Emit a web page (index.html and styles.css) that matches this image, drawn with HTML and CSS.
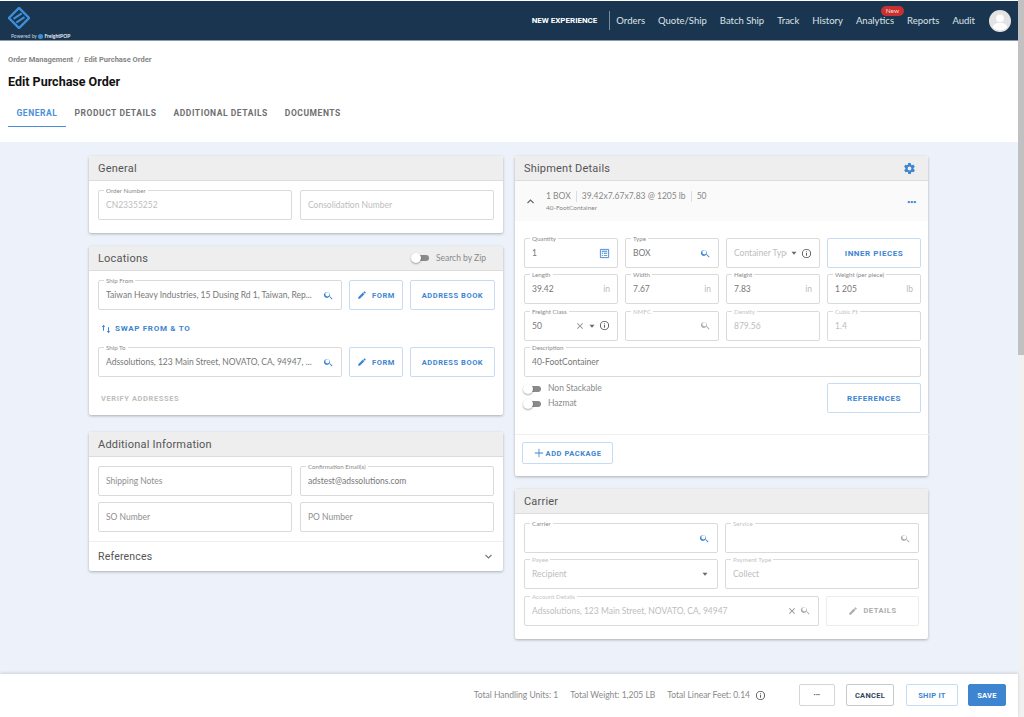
FILE: index.html
```html
<!DOCTYPE html>
<html lang="en">
<head>
    <meta charset="UTF-8">
    <title>Edit Purchase Order</title>
    <link rel="stylesheet" href="styles.css">
</head>
<body>
<svg class="defs" width="0" height="0">
    <symbol id="i-search" viewBox="0 0 24 24"><path d="M15.5 14h-.8l-.3-.3A6.5 6.5 0 1 0 14 14.4l.3.3v.8l5 5 1.5-1.5-5-5zm-6 0a4.5 4.5 0 1 1 0-9 4.5 4.5 0 0 1 0 9z"/></symbol>
    <symbol id="i-pencil" viewBox="0 0 24 24"><path d="M3 17.2V21h3.8L17.8 9.9l-3.7-3.7L3 17.2zM20.7 7a1 1 0 0 0 0-1.4l-2.3-2.3a1 1 0 0 0-1.4 0l-1.8 1.8 3.7 3.7L20.7 7z"/></symbol>
    <symbol id="i-info" viewBox="0 0 24 24"><path d="M11 7h2v2h-2zm0 4h2v6h-2zm1-9a10 10 0 1 0 0 20 10 10 0 0 0 0-20zm0 18a8 8 0 1 1 0-16 8 8 0 0 1 0 16z"/></symbol>
    <symbol id="i-close" viewBox="0 0 24 24"><path d="M19 6.4 17.6 5 12 10.6 6.4 5 5 6.4 10.6 12 5 17.6 6.4 19l5.6-5.6 5.6 5.6 1.4-1.4-5.6-5.6z"/></symbol>
    <symbol id="i-caret" viewBox="0 0 24 24"><path d="M6 9h12l-6 7z"/></symbol>
</svg>
<div class="app">
    <div class="page">
        <header class="topbar">
            <div class="brand">
                <svg class="brand-mark" viewBox="0 0 24 24" width="22" height="22"><path d="M12 1 23 12 12 23 1 12z" fill="none" stroke="#3f8fd8" stroke-width="2.6"/><path d="M6 13 15 7M9 17l9-6" stroke="#3f8fd8" stroke-width="2.4" fill="none"/></svg>
                <div class="brand-sub">Powered by <span class="brand-dot"></span> <b>FreightPOP</b></div>
            </div>
            <nav class="nav">
                <a class="nav-new">NEW EXPERIENCE</a>
                <span class="nav-sep"></span>
                <a>Orders</a>
                <a>Quote/Ship</a>
                <a>Batch Ship</a>
                <a>Track</a>
                <a>History</a>
                <a class="nav-badged">Analytics<span class="badge">New</span></a>
                <a>Reports</a>
                <a>Audit</a>
                <svg class="avatar" viewBox="0 0 24 24" width="22" height="22"><circle cx="12" cy="12" r="12" fill="#e3e3e3"/><circle cx="12" cy="9" r="4.2" fill="#fff"/><path d="M4 19c1-4 5-5 8-5s7 1 8 5a12 12 0 0 1-16 0z" fill="#fff"/></svg>
            </nav>
        </header>

        <section class="page-head">
            <div class="crumbs"><span>Order Management</span><i>/</i><span>Edit Purchase Order</span></div>
            <h1>Edit Purchase Order</h1>
            <div class="tabs">
                <a class="tab active">GENERAL</a>
                <a class="tab">PRODUCT DETAILS</a>
                <a class="tab">ADDITIONAL DETAILS</a>
                <a class="tab">DOCUMENTS</a>
            </div>
        </section>

        <main class="content">
            <div class="column">
                <section class="card card-general">
                    <div class="card-head"><h2>General</h2></div>
                    <div class="card-body two-col">
                        <div class="field"><label>Order Number</label><span class="val off">CN23355252</span></div>
                        <div class="field"><span class="val hint off">Consolidation Number</span></div>
                    </div>
                </section>

                <section class="card card-locations">
                    <div class="card-head">
                        <h2>Locations</h2>
                        <div class="zip"><span class="toggle"></span><span>Search by Zip</span></div>
                    </div>
                    <div class="card-body loc-body">
                        <div class="loc-row">
                            <div class="field"><label>Ship From</label><span class="val">Taiwan Heavy Industries, 15 Dusing Rd 1, Taiwan, Rep...</span><svg class="ico blue"><use href="#i-search"/></svg></div>
                            <button class="btn btn-form"><svg class="ico-sm"><use href="#i-pencil"/></svg>FORM</button>
                            <button class="btn btn-book">ADDRESS BOOK</button>
                        </div>
                        <a class="swap">
                            <svg viewBox="0 0 12 12" width="10" height="10"><path d="M3 1 1 3.5h1.4V8h1.2V3.5H5zM8.4 4v4.500H7L9 11l2-2.500H9.600V4z" fill="#3d85d1"/></svg>
                            SWAP FROM &amp; TO
                        </a>
                        <div class="loc-row">
                            <div class="field"><label>Ship To</label><span class="val">Adssolutions, 123 Main Street, NOVATO, CA, 94947, ...</span><svg class="ico blue"><use href="#i-search"/></svg></div>
                            <button class="btn btn-form"><svg class="ico-sm"><use href="#i-pencil"/></svg>FORM</button>
                            <button class="btn btn-book">ADDRESS BOOK</button>
                        </div>
                        <a class="verify">VERIFY ADDRESSES</a>
                    </div>
                </section>

                <section class="card card-additional">
                    <div class="card-head"><h2>Additional Information</h2></div>
                    <div class="card-body two-col">
                        <div class="field"><span class="val hint">Shipping Notes</span></div>
                        <div class="field"><label>Confirmation Email(s)</label><span class="val">adstest@adssolutions.com</span></div>
                        <div class="field"><span class="val hint">SO Number</span></div>
                        <div class="field"><span class="val hint">PO Number</span></div>
                    </div>
                    <div class="refs-row">
                        <span>References</span>
                        <svg viewBox="0 0 12 12" width="9" height="9"><path d="M2 4l4 4 4-4" fill="none" stroke="#777" stroke-width="1.500"/></svg>
                    </div>
                </section>
            </div>

            <div class="column">
                <section class="card card-shipment">
                    <div class="card-head">
                        <h2>Shipment Details</h2>
                        <svg class="gear" viewBox="0 0 24 24" width="13" height="13"><path fill="#3d85d1" d="M19.4 13a7.500 7.500 0 0 0 0-2l2.100-1.600a.5.5 0 0 0 .1-.6l-2-3.500a.5.5 0 0 0-.6-.2l-2.500 1a7.300 7.300 0 0 0-1.700-1l-.4-2.600a.5.5 0 0 0-.5-.5h-4a.5.5 0 0 0-.5.400l-.4 2.700a7.700 7.700 0 0 0-1.700 1l-2.500-1a.5.5 0 0 0-.6.200l-2 3.500a.5.5 0 0 0 .1.600L4.600 11a7.900 7.900 0 0 0 0 2l-2.100 1.600a.5.5 0 0 0-.1.6l2 3.500c.1.200.4.300.6.200l2.500-1c.5.400 1.100.700 1.700 1l.4 2.600c0 .3.200.5.500.5h4c.3 0 .5-.2.500-.4l.4-2.700c.6-.3 1.200-.6 1.700-1l2.500 1c.2.100.5 0 .6-.2l2-3.500a.5.5 0 0 0-.1-.6L19.400 13zM12 15.500a3.500 3.500 0 1 1 0-7 3.500 3.500 0 0 1 0 7z"/></svg>
                    </div>
                    <div class="pkg-summary">
                        <svg viewBox="0 0 12 12" width="9" height="9"><path d="M2 8l4-4 4 4" fill="none" stroke="#666" stroke-width="1.500"/></svg>
                        <div class="pkg-text">
                            <div class="pkg-line"><span>1 BOX</span><span>39.42x7.67x7.83 @ 1205 lb</span><span>50</span></div>
                            <div class="pkg-desc">40-FootContainer</div>
                        </div>
                        <span class="dots blue-dots">•••</span>
                    </div>
                    <div class="pkg-body">
                        <div class="four-col">
                            <div class="field"><label>Quantity</label><span class="val">1</span><svg class="ico blue" viewBox="0 0 12 12"><path fill="none" stroke="#3d85d1" d="M1.500 1.500h9v9h-9z"/><path fill="#3d85d1" d="M3 3h6v1.200H3zM3 5.300h1.500v1H3zm0 2.200h1.500v1H3zm2.300-2.200h3.700v1H5.300zm0 2.200h3.700v1H5.300z"/></svg></div>
                            <div class="field"><label>Type</label><span class="val">BOX</span><svg class="ico blue"><use href="#i-search"/></svg></div>
                            <div class="field"><span class="val hint off clip">Container Type</span><svg class="ico-caret"><use href="#i-caret"/></svg><svg class="ico dark"><use href="#i-info"/></svg></div>
                            <button class="btn btn-tall">INNER PIECES</button>

                            <div class="field"><label>Length</label><span class="val">39.42</span><span class="unit">in</span></div>
                            <div class="field"><label>Width</label><span class="val">7.67</span><span class="unit">in</span></div>
                            <div class="field"><label>Height</label><span class="val">7.83</span><span class="unit">in</span></div>
                            <div class="field"><label>Weight (per piece)</label><span class="val">1 205</span><span class="unit">lb</span></div>

                            <div class="field"><label>Freight Class</label><span class="val">50</span><svg class="ico-x"><use href="#i-close"/></svg><svg class="ico-caret"><use href="#i-caret"/></svg><svg class="ico dark"><use href="#i-info"/></svg></div>
                            <div class="field"><label class="off">NMFC</label><span class="val"></span><svg class="ico grey"><use href="#i-search"/></svg></div>
                            <div class="field"><label class="off">Density</label><span class="val off">879.56</span></div>
                            <div class="field"><label class="off">Cubic Ft</label><span class="val off">1.4</span></div>

                            <div class="field span-4"><label>Description</label><span class="val">40-FootContainer</span></div>
                        </div>
                        <div class="pkg-foot">
                            <div class="switches">
                                <div class="switch"><span class="toggle"></span><span>Non Stackable</span></div>
                                <div class="switch"><span class="toggle"></span><span>Hazmat</span></div>
                            </div>
                            <button class="btn btn-tall btn-refs">REFERENCES</button>
                        </div>
                    </div>
                    <div class="pkg-add">
                        <button class="btn btn-add"><svg viewBox="0 0 12 12" width="10" height="10"><path d="M5.500 1h1v4.500H11v1H6.500V11h-1V6.500H1v-1h4.500z" fill="#3d85d1"/></svg>ADD PACKAGE</button>
                    </div>
                </section>

                <section class="card card-carrier">
                    <div class="card-head"><h2>Carrier</h2></div>
                    <div class="card-body carrier-body">
                        <div class="field"><label>Carrier</label><span class="val"></span><svg class="ico blue"><use href="#i-search"/></svg></div>
                        <div class="field"><label class="off">Service</label><span class="val"></span><svg class="ico grey"><use href="#i-search"/></svg></div>
                        <div class="field"><label class="off">Payee</label><span class="val off">Recipient</span><svg class="ico-caret"><use href="#i-caret"/></svg></div>
                        <div class="field"><label class="off">Payment Type</label><span class="val off">Collect</span></div>
                        <div class="account-row">
                            <div class="field"><label class="off">Account Details</label><span class="val off">Adssolutions, 123 Main Street, NOVATO, CA, 94947</span><svg class="ico-x"><use href="#i-close"/></svg><svg class="ico grey"><use href="#i-search"/></svg></div>
                            <button class="btn btn-details"><svg class="ico-sm"><use href="#i-pencil"/></svg>DETAILS</button>
                        </div>
                    </div>
                </section>
            </div>
        </main>

        <footer class="bottombar">
            <span>Total Handling Units: 1</span>
            <span>Total Weight: 1,205 LB</span>
            <span>Total Linear Feet: 0.14</span>
            <svg class="ico dark foot-info"><use href="#i-info"/></svg>
            <button class="fbtn fbtn-more">•••</button>
            <button class="fbtn fbtn-cancel">CANCEL</button>
            <button class="fbtn fbtn-ship">SHIP IT</button>
            <button class="fbtn fbtn-save">SAVE</button>
        </footer>
    </div>
    <div class="scrollbar"><span class="thumb"></span></div>
</div>
</body>
</html>
```

FILE: styles.css
```css
html, body { margin: 0; height: 100%; overflow: hidden; }
body { font-family: Lato, 'Open Sans', sans-serif; color: #777; background: #fff; }
.defs { position: absolute; }
a { text-decoration: none; }
button { font-family: inherit; cursor: pointer; }

.app { display: flex; height: 717px; }
.page { flex: 1; min-width: 0; display: flex; flex-direction: column; }
.scrollbar { width: 6px; background: #f1f1f1; }
.thumb { display: block; height: 355px; background: #c1c1c1; }

/* top bar */
.topbar { height: 39px; margin-top: 1px; flex: none; background: #1a3550; border-bottom: 1px solid #8a9aa8; box-sizing: border-box; height: 40px; display: flex; justify-content: space-between; align-items: center; padding: 0 7px 0 8px; }
.brand { display: flex; flex-direction: column; gap: 4px; padding-top: 4px; }
.brand-mark { display: block; margin-left: 0; }
.brand-sub { font-size: 5px; color: #c9d4de; white-space: nowrap; margin-left: 3px; }
.brand-sub b { color: #e8eef3; }
.brand-dot { display: inline-block; width: 5px; height: 5px; border-radius: 50%; background: #3f8fd8; vertical-align: -1px; }
.nav { display: flex; align-items: center; gap: 13px; font-size: 9.5px; color: #dde3e8; }
.nav a { color: #dde3e8; white-space: nowrap; }
.nav .nav-new { font-family: Roboto, sans-serif; font-weight: 700; font-size: 8px; color: #fff; }
.nav-sep { width: 1px; height: 19px; background: #7b8c9c; margin: 0 -7px 0 -1px; }
.nav-badged { position: relative; }
.badge { position: absolute; top: -9px; right: -10px; background: #c8312f; color: #f4d8d8; font-size: 6.5px; padding: 1px 5px; border-radius: 6px; line-height: 8px; }
.avatar { margin-left: 1px; }

/* page heading */
.page-head { flex: none; height: 101px; box-sizing: border-box; padding: 14px 8px 0; background: #fff; }
.crumbs { font-family: Roboto, sans-serif; font-weight: 700; font-size: 7.5px; line-height: 10px; color: #858585; }
.crumbs i { font-style: normal; font-weight: 400; margin: 0 4px; }
h1 { font-family: Roboto, sans-serif; font-weight: 700; font-size: 12.5px; line-height: 16px; color: #111; margin: 9px 0 0; }
.tabs { display: flex; margin-top: 15px; }
.tab { font-family: Roboto, sans-serif; font-weight: 700; font-size: 8.5px; letter-spacing: .55px; color: #6f6f6f; height: 22px; line-height: 16px; padding: 0 8.500px; box-sizing: border-box; border-bottom: 1px solid transparent; }
.tab.active { color: #4a90d9; border-bottom-color: #4a90d9; }

/* main */
.content { flex: 1; min-height: 0; overflow: hidden; background: #edf1f9; display: grid; grid-template-columns: 414px 413px; column-gap: 12px; justify-content: start; padding: 14px 0 0 89px; align-items: start; }
.column { display: flex; flex-direction: column; }
.card { background: #fff; border-radius: 2px; box-shadow: 0 1px 3px rgba(0,0,0,.28); }
.card-general { height: 77px; margin-bottom: 13px; }
.card-locations { height: 169px; margin-bottom: 17px; }
.card-additional { height: 139px; }
.card-shipment { height: 320px; margin-bottom: 13px; }
.card-carrier { height: 150px; }
.card-head { height: 25px; box-sizing: border-box; background: #eeeeee; border-bottom: 1px solid #dcdcdc; display: flex; align-items: center; justify-content: space-between; padding: 0 12px 0 9px; border-radius: 2px 2px 0 0; }
h2 { font-family: Roboto, sans-serif; font-weight: 400; font-size: 11px; color: #555; margin: 0; letter-spacing: .2px; }
.card-body { padding: 9px 9px 0; }
.two-col { display: grid; grid-template-columns: 1fr 1fr; gap: 6px 8px; }

/* outlined fields */
.field { position: relative; height: 30px; box-sizing: border-box; border: 1px solid #dadada; border-radius: 2px; display: flex; align-items: center; padding: 0 7px; font-size: 8.5px; background: #fff; min-width: 0; }
.field label { position: absolute; top: -4px; left: 5px; padding: 0 2px; background: #fff; font-size: 6.2px; line-height: 7px; color: #8a8a8a; white-space: nowrap; }
.field label.off { color: #c4c4c4; }
.val { flex: 1; min-width: 0; color: #777; white-space: nowrap; overflow: hidden; }
.val.hint { color: #8f8f8f; }
.val.off { color: #bdbdbd; }
.val.clip { flex: none; width: 53px; }
.unit { color: #bbb; font-size: 8.5px; }
.span-4 { grid-column: span 4; }
.ico { width: 11px; height: 11px; flex: none; }
.ico-sm { width: 10px; height: 10px; fill: #3d85d1; flex: none; }
.ico-caret { width: 10px; height: 10px; flex: none; fill: #666; }
.ico-x { width: 10px; height: 10px; flex: none; fill: #8a8a8a; }
.blue { fill: #3d85d1; }
.grey { fill: #aaa; }
.dark { fill: #555; }

/* buttons */
.btn { background: #fff; border: 1px solid #c6dcf2; border-radius: 2px; color: #3d85d1; font-family: Roboto, sans-serif; font-weight: 700; font-size: 7.5px; letter-spacing: .55px; padding: 0; display: flex; align-items: center; justify-content: center; gap: 5px; }

/* locations */
.zip { display: flex; align-items: center; gap: 7px; font-size: 8.5px; color: #8a8a8a; margin-right: 5px; }
.toggle { position: relative; display: block; width: 17px; height: 6px; margin-left: 1px; background: #8a8a8a; border-radius: 3px; }
.toggle::before { content: ""; position: absolute; left: -1px; top: -2px; width: 10px; height: 10px; border-radius: 50%; background: #fff; box-shadow: 0 1px 2px rgba(0,0,0,.35); }
.loc-body { padding-top: 9px; }
.loc-row { display: grid; grid-template-columns: 244px 54px 85px; gap: 7px; height: 30px; }
.swap { display: flex; align-items: center; gap: 4px; height: 37px; padding-left: 3px; font-family: Roboto, sans-serif; font-weight: 700; font-size: 8px; letter-spacing: .7px; color: #3d85d1; }
.verify { display: block; margin: 17px 0 0 3px; font-family: Roboto, sans-serif; font-weight: 700; font-size: 7.5px; letter-spacing: .6px; color: #bdbdbd; }

/* additional info */
.refs-row { margin-top: 9px; height: 29px; border-top: 1px solid #eee; display: flex; align-items: center; justify-content: space-between; padding: 0 10px 0 9px; font-family: Roboto, sans-serif; font-size: 10.5px; color: #555; letter-spacing: .2px; }

/* shipment */
.gear { margin-right: 0; }
.pkg-summary { height: 40px; box-sizing: border-box; background: #fafafa; display: flex; align-items: center; padding: 0 12px 0 11px; gap: 7px; }
.pkg-text { flex: 1; padding-left: 4px; }
.pkg-line { display: flex; font-size: 8.5px; line-height: 11px; color: #888; }
.pkg-line span { padding-right: 5px; margin-right: 5px; border-right: 1px solid #ddd; }
.pkg-line span:last-child { border: 0; }
.pkg-desc { font-size: 6.500px; color: #888; margin-top: 2px; }
.dots { font-size: 6px; letter-spacing: -.5px; }
.blue-dots { color: #3d85d1; }
.pkg-body { height: 214px; box-sizing: border-box; width: 414px; padding: 17px 8px 0 9px; border-bottom: 1px solid #f0f0f0; }
.four-col { display: grid; grid-template-columns: repeat(4, 94px); gap: 6.4px 7px; }
.four-col .field { gap: 2px; }
.btn-tall { height: 30px; font-size: 8px; }
.pkg-foot { display: flex; justify-content: space-between; margin-top: 6px; align-items: flex-start; }
.switches { display: flex; flex-direction: column; gap: 6px; padding-top: 1px; margin-left: -1px; }
.switch { display: flex; align-items: center; gap: 7px; font-size: 8.5px; line-height: 9px; color: #8a8a8a; }
.btn-refs { width: 94px; }
.pkg-add { padding: 7px 7px; }
.btn-add { width: 91px; height: 22px; gap: 2px; font-size: 7.500px; }

/* carrier */
.carrier-body { display: grid; grid-template-columns: 1fr 1fr; gap: 6.300px 7px; padding: 9px 9px 0; }
.account-row { grid-column: span 2; display: grid; grid-template-columns: 295px 93px; gap: 7px; }
.account-row .field { gap: 3px; }
.btn-details { color: #adadad; border-color: #ececec; }
.btn-details .ico-sm { fill: #adadad; }

/* bottom bar */
.bottombar { flex: none; height: 43px; box-sizing: border-box; background: #fff; box-shadow: 0 -1px 3px rgba(0,0,0,.14); display: flex; align-items: center; justify-content: flex-end; padding: 0 12px 1px 0; font-size: 8.500px; color: #8a8a8a; gap: 12px; position: relative; }
.foot-info { margin-left: -7px; }
.fbtn { height: 22px; box-sizing: border-box; border-radius: 2px; border: 1px solid #d5d5d5; background: #fff; font-family: Roboto, sans-serif; font-weight: 700; font-size: 7.500px; letter-spacing: .3px; padding: 0; }
.fbtn-more { width: 36px; margin: 0 -1px 0 21px; font-size: 5px; color: #444; }
.fbtn-cancel { width: 48px; color: #33475b; border-color: #c4c9ce; margin-left: 0; }
.fbtn-ship { width: 52px; color: #3d85d1; border-color: #c6dcf2; }
.fbtn-save { width: 38px; color: #fff; background: #3d85d1; border-color: #3d85d1; margin-left: -2px; }
```
